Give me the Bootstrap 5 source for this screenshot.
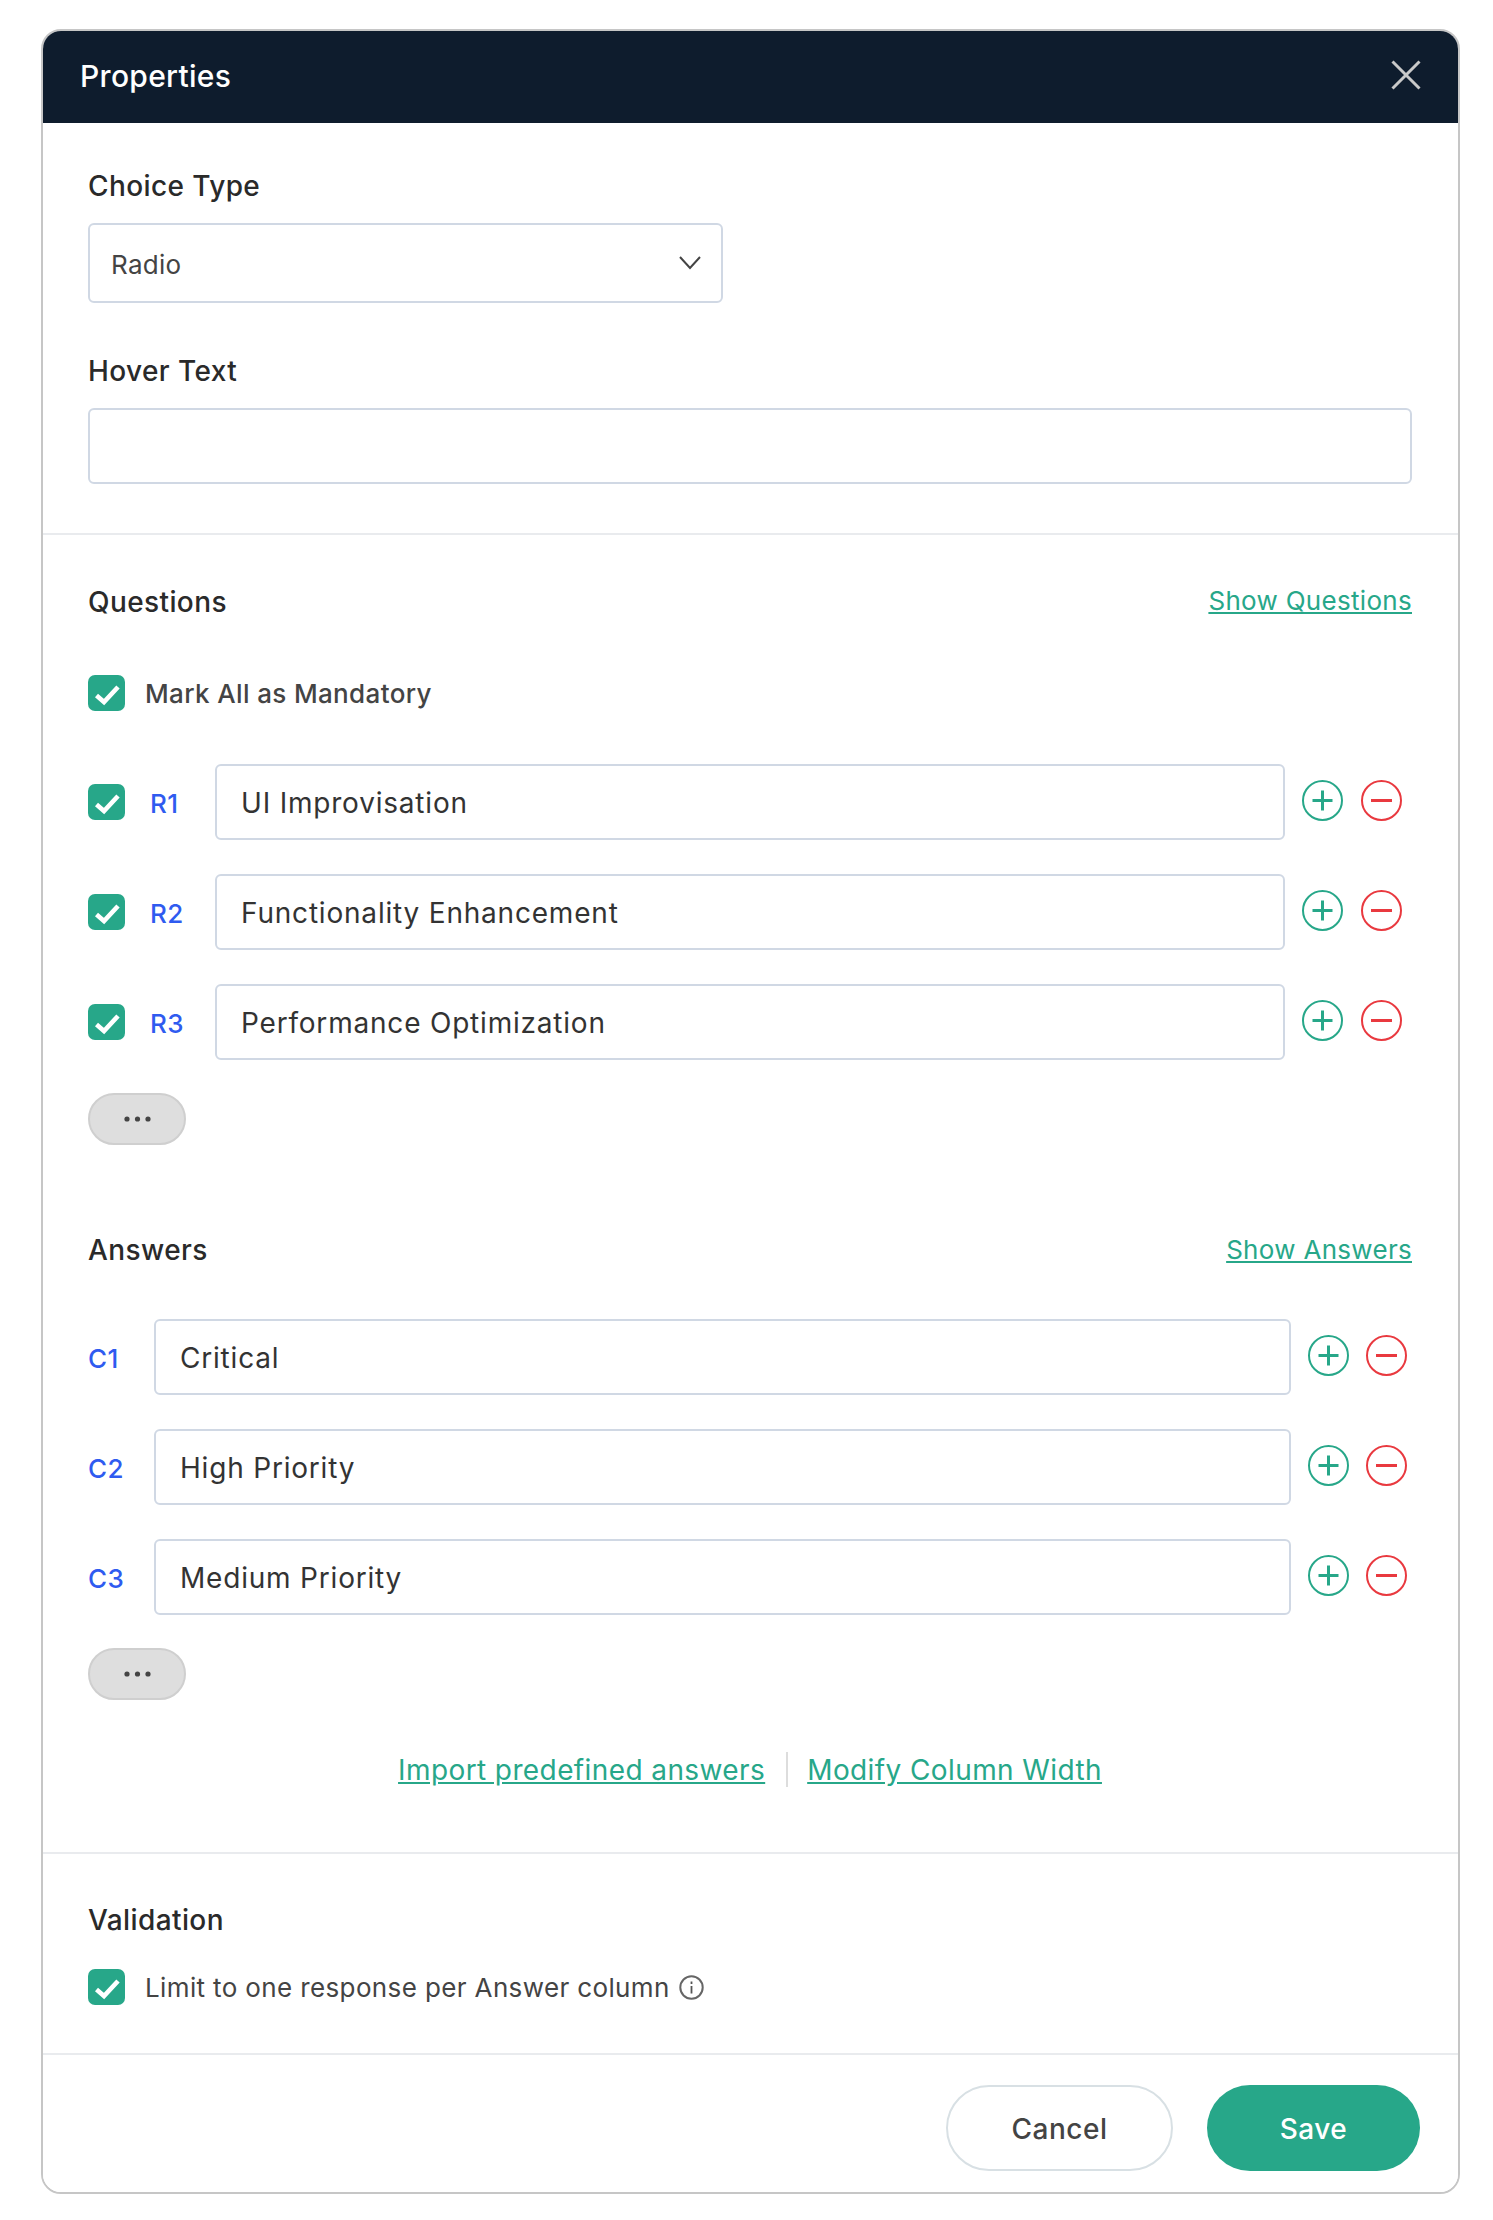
<!DOCTYPE html>
<html lang="en">
<head>
  <meta charset="UTF-8" />
  <title>Properties</title>
  <link rel="stylesheet" href="https://cdn.jsdelivr.net/npm/bootstrap@5.3.0/dist/css/bootstrap.min.css" />
  <style>
    body { background: #fff; font-family: Inter, "Liberation Sans", sans-serif; color: #333; }
    .props-card { width: 1419px; margin: 29px 0 0 41px; border: 2px solid #c6c6c6; border-radius: 20px; overflow: hidden; }
    .props-head { height: 92px; background: #0e1c2d; color: #fff; padding: 0 37px 2px 37px; border: 0; border-radius: 0; font-size: 30px; font-weight: 500; letter-spacing: .3px; }
    .close-ico { margin-bottom: 3px; }
    .props-sec { padding: 48px 46px 49px 45px; border-bottom: 2px solid #e9ebee; }
    .sec-b { padding-top: 51px; padding-bottom: 65px; }
    .sec-c { padding-top: 51px; padding-bottom: 48px; }
    .sec-title { font-size: 28px; font-weight: 500; line-height: 30px; letter-spacing: .4px; color: #2a2a2a; margin: 0; }
    .q-title { line-height: 32px; height: 30px; }
    .gap-label { margin-bottom: 22px; }
    .gap-hover { margin-top: 53px; }
    .props-sec .form-control, .props-sec .form-select { border: 2px solid #d0d8e4; border-radius: 6px; font-size: 28px; letter-spacing: .8px; color: #333; height: 76px; padding: 2px 24px 0; box-shadow: none; }
    .props-sec .form-select { width: 635px; height: 80px; padding-left: 21px; font-size: 26px; letter-spacing: .3px; color: #444;
      background-image: url("data:image/svg+xml,%3csvg xmlns='http://www.w3.org/2000/svg' viewBox='0 0 22 14'%3e%3cpath fill='none' stroke='%23444' stroke-width='2' d='M1 1l10 11L21 1'/%3e%3c/svg%3e");
      background-size: 22px 14px; background-position: right 20px center; }
    .green-link { color: #27a789; font-size: 26px; line-height: 30px; letter-spacing: .3px; }
    .green-link:hover { color: #27a789; }
    .link-big { font-size: 28px; letter-spacing: .4px; }
    .green-check.form-check-input { width: 37px; height: 36px; margin: 0; flex-shrink: 0; border: 0; border-radius: 7px; background-color: #27a789; background-size: 37px 36px;
      background-image: url("data:image/svg+xml,%3csvg xmlns='http://www.w3.org/2000/svg' viewBox='0 0 37 36'%3e%3cpath fill='none' stroke='%23fff' stroke-width='4.6' d='M8.5 20.5l7.5 6.5L30 12'/%3e%3c/svg%3e"); }
    .row-check { margin-top: 2px; }
    .check-text { font-size: 26px; line-height: 34px; letter-spacing: .36px; color: #444; font-weight: 500; margin-left: 20px; padding-top: 2px; }
    .limit-text { font-weight: 400; letter-spacing: .37px; }
    .mark-row { margin-top: 59px; margin-bottom: 53px; }
    .row-list { display: flex; flex-direction: column; gap: 34px; }
    .row-code { color: #2f5bf0; font-size: 26px; font-weight: 500; letter-spacing: .5px; padding-top: 2px; }
    .q-code { width: 65px; margin-left: 25px; }
    .a-code { width: 66px; }
    .row-icons { display: flex; gap: 18px; margin-left: 17px; margin-bottom: 4px; }
    .q-icons { margin-right: 10px; }
    .a-icons { gap: 17px; margin-right: 5px; }
    .more-btn { width: 98px; height: 52px; margin-top: 33px; padding: 0; background: #dedede; border: 2px solid #cfcfcf; color: #444; display: flex; align-items: center; justify-content: center; }
    .ans-title { margin-top: 90px; margin-bottom: 54px; }
    .link-row { margin-top: 52px; height: 35px; }
    .link-sep { width: 2px; height: 35px; background: #dddddd; margin: 0 19px 0 21px; }
    .val-row { margin-top: 34px; }
    .info-ico { margin-left: 9px; }
    .props-foot { background: #fff; border: 0; border-radius: 0; padding: 30px 38px 21px 0; gap: 34px; }
    .foot-btn { height: 86px; font-size: 28px; font-weight: 500; letter-spacing: .5px; padding-top: 8px; }
    .btn-cancel { width: 227px; background: #fff; border: 2px solid #d8e0e4; color: #444; }
    .btn-save { width: 213px; background: #27a789; border: 0; color: #fff; }
    .btn-save:hover { background: #27a789; color: #fff; }
  </style>
</head>
<body>

<!-- Iconos reutilizados en las filas -->
<svg class="d-none">
  <symbol id="ico-plus" viewBox="0 0 41 41">
    <circle cx="20.5" cy="20.5" r="19.5" fill="none" stroke="#27a789" stroke-width="2" />
    <path d="M20.5 10.5v20M10.5 20.5h20" fill="none" stroke="#27a789" stroke-width="3" />
  </symbol>
  <symbol id="ico-minus" viewBox="0 0 41 41">
    <circle cx="20.5" cy="20.5" r="19.5" fill="none" stroke="#e9393f" stroke-width="2" />
    <path d="M10 20.5h21" fill="none" stroke="#e9393f" stroke-width="3" />
  </symbol>
  <symbol id="ico-dots" viewBox="0 0 27 6">
    <circle cx="3" cy="3" r="2.6" fill="#444" />
    <circle cx="13.5" cy="3" r="2.6" fill="#444" />
    <circle cx="24" cy="3" r="2.6" fill="#444" />
  </symbol>
</svg>

<div class="card props-card">
  <div class="card-header props-head d-flex align-items-center justify-content-between">
    <span>Properties</span>
    <svg class="close-ico" width="30" height="30" viewBox="0 0 30 30" aria-label="Close"><path d="M1.5 1.5l27 27M28.5 1.5l-27 27" stroke="#c9c9c9" stroke-width="3" fill="none" /></svg>
  </div>

  <!-- Tipo y texto -->
  <div class="props-sec">
    <label class="form-label sec-title gap-label d-block">Choice Type</label>
    <select class="form-select">
      <option>Radio</option>
    </select>
    <label class="form-label sec-title gap-label gap-hover d-block">Hover Text</label>
    <input type="text" class="form-control" />
  </div>

  <!-- Preguntas y respuestas -->
  <div class="props-sec sec-b">
    <div class="d-flex justify-content-between align-items-center">
      <h2 class="sec-title q-title">Questions</h2>
      <a href="#" class="green-link">Show Questions</a>
    </div>
    <div class="d-flex align-items-center mark-row">
      <input class="form-check-input green-check" type="checkbox" checked />
      <span class="check-text">Mark All as Mandatory</span>
    </div>
    <div class="row-list">
      <div class="d-flex align-items-center">
        <input class="form-check-input green-check row-check" type="checkbox" checked />
        <span class="row-code q-code">R1</span>
        <input type="text" class="form-control flex-grow-1 w-auto" value="UI Improvisation" />
        <div class="row-icons q-icons">
          <svg width="41" height="41"><use href="#ico-plus" /></svg>
          <svg width="41" height="41"><use href="#ico-minus" /></svg>
        </div>
      </div>
      <div class="d-flex align-items-center">
        <input class="form-check-input green-check row-check" type="checkbox" checked />
        <span class="row-code q-code">R2</span>
        <input type="text" class="form-control flex-grow-1 w-auto" value="Functionality Enhancement" />
        <div class="row-icons q-icons">
          <svg width="41" height="41"><use href="#ico-plus" /></svg>
          <svg width="41" height="41"><use href="#ico-minus" /></svg>
        </div>
      </div>
      <div class="d-flex align-items-center">
        <input class="form-check-input green-check row-check" type="checkbox" checked />
        <span class="row-code q-code">R3</span>
        <input type="text" class="form-control flex-grow-1 w-auto" value="Performance Optimization" />
        <div class="row-icons q-icons">
          <svg width="41" height="41"><use href="#ico-plus" /></svg>
          <svg width="41" height="41"><use href="#ico-minus" /></svg>
        </div>
      </div>
    </div>
    <button type="button" class="btn rounded-pill more-btn"><svg width="27" height="6"><use href="#ico-dots" /></svg></button>

    <div class="d-flex justify-content-between align-items-center ans-title">
      <h2 class="sec-title">Answers</h2>
      <a href="#" class="green-link">Show Answers</a>
    </div>
    <div class="row-list">
      <div class="d-flex align-items-center">
        <span class="row-code a-code">C1</span>
        <input type="text" class="form-control flex-grow-1 w-auto" value="Critical" />
        <div class="row-icons a-icons">
          <svg width="41" height="41"><use href="#ico-plus" /></svg>
          <svg width="41" height="41"><use href="#ico-minus" /></svg>
        </div>
      </div>
      <div class="d-flex align-items-center">
        <span class="row-code a-code">C2</span>
        <input type="text" class="form-control flex-grow-1 w-auto" value="High Priority" />
        <div class="row-icons a-icons">
          <svg width="41" height="41"><use href="#ico-plus" /></svg>
          <svg width="41" height="41"><use href="#ico-minus" /></svg>
        </div>
      </div>
      <div class="d-flex align-items-center">
        <span class="row-code a-code">C3</span>
        <input type="text" class="form-control flex-grow-1 w-auto" value="Medium Priority" />
        <div class="row-icons a-icons">
          <svg width="41" height="41"><use href="#ico-plus" /></svg>
          <svg width="41" height="41"><use href="#ico-minus" /></svg>
        </div>
      </div>
    </div>
    <button type="button" class="btn rounded-pill more-btn"><svg width="27" height="6"><use href="#ico-dots" /></svg></button>

    <div class="d-flex justify-content-center align-items-center link-row">
      <a href="#" class="green-link link-big">Import predefined answers</a>
      <span class="link-sep"></span>
      <a href="#" class="green-link link-big">Modify Column Width</a>
    </div>
  </div>

  <!-- Validación -->
  <div class="props-sec sec-c">
    <h2 class="sec-title">Validation</h2>
    <div class="d-flex align-items-center val-row">
      <input class="form-check-input green-check" type="checkbox" checked />
      <span class="check-text limit-text">Limit to one response per Answer column</span>
      <svg class="info-ico" width="25" height="25" viewBox="0 0 25 25"><circle cx="12.5" cy="12.5" r="11.2" fill="none" stroke="#666" stroke-width="2" /><path d="M12.5 11v7.5M12.5 6.5v2.4" stroke="#555" stroke-width="1.8" fill="none" /></svg>
    </div>
  </div>

  <div class="card-footer props-foot d-flex justify-content-end">
    <button type="button" class="btn rounded-pill foot-btn btn-cancel">Cancel</button>
    <button type="button" class="btn rounded-pill foot-btn btn-save">Save</button>
  </div>
</div>

<script src="https://cdn.jsdelivr.net/npm/bootstrap@5.3.0/dist/js/bootstrap.bundle.min.js"></script>
</body>
</html>
